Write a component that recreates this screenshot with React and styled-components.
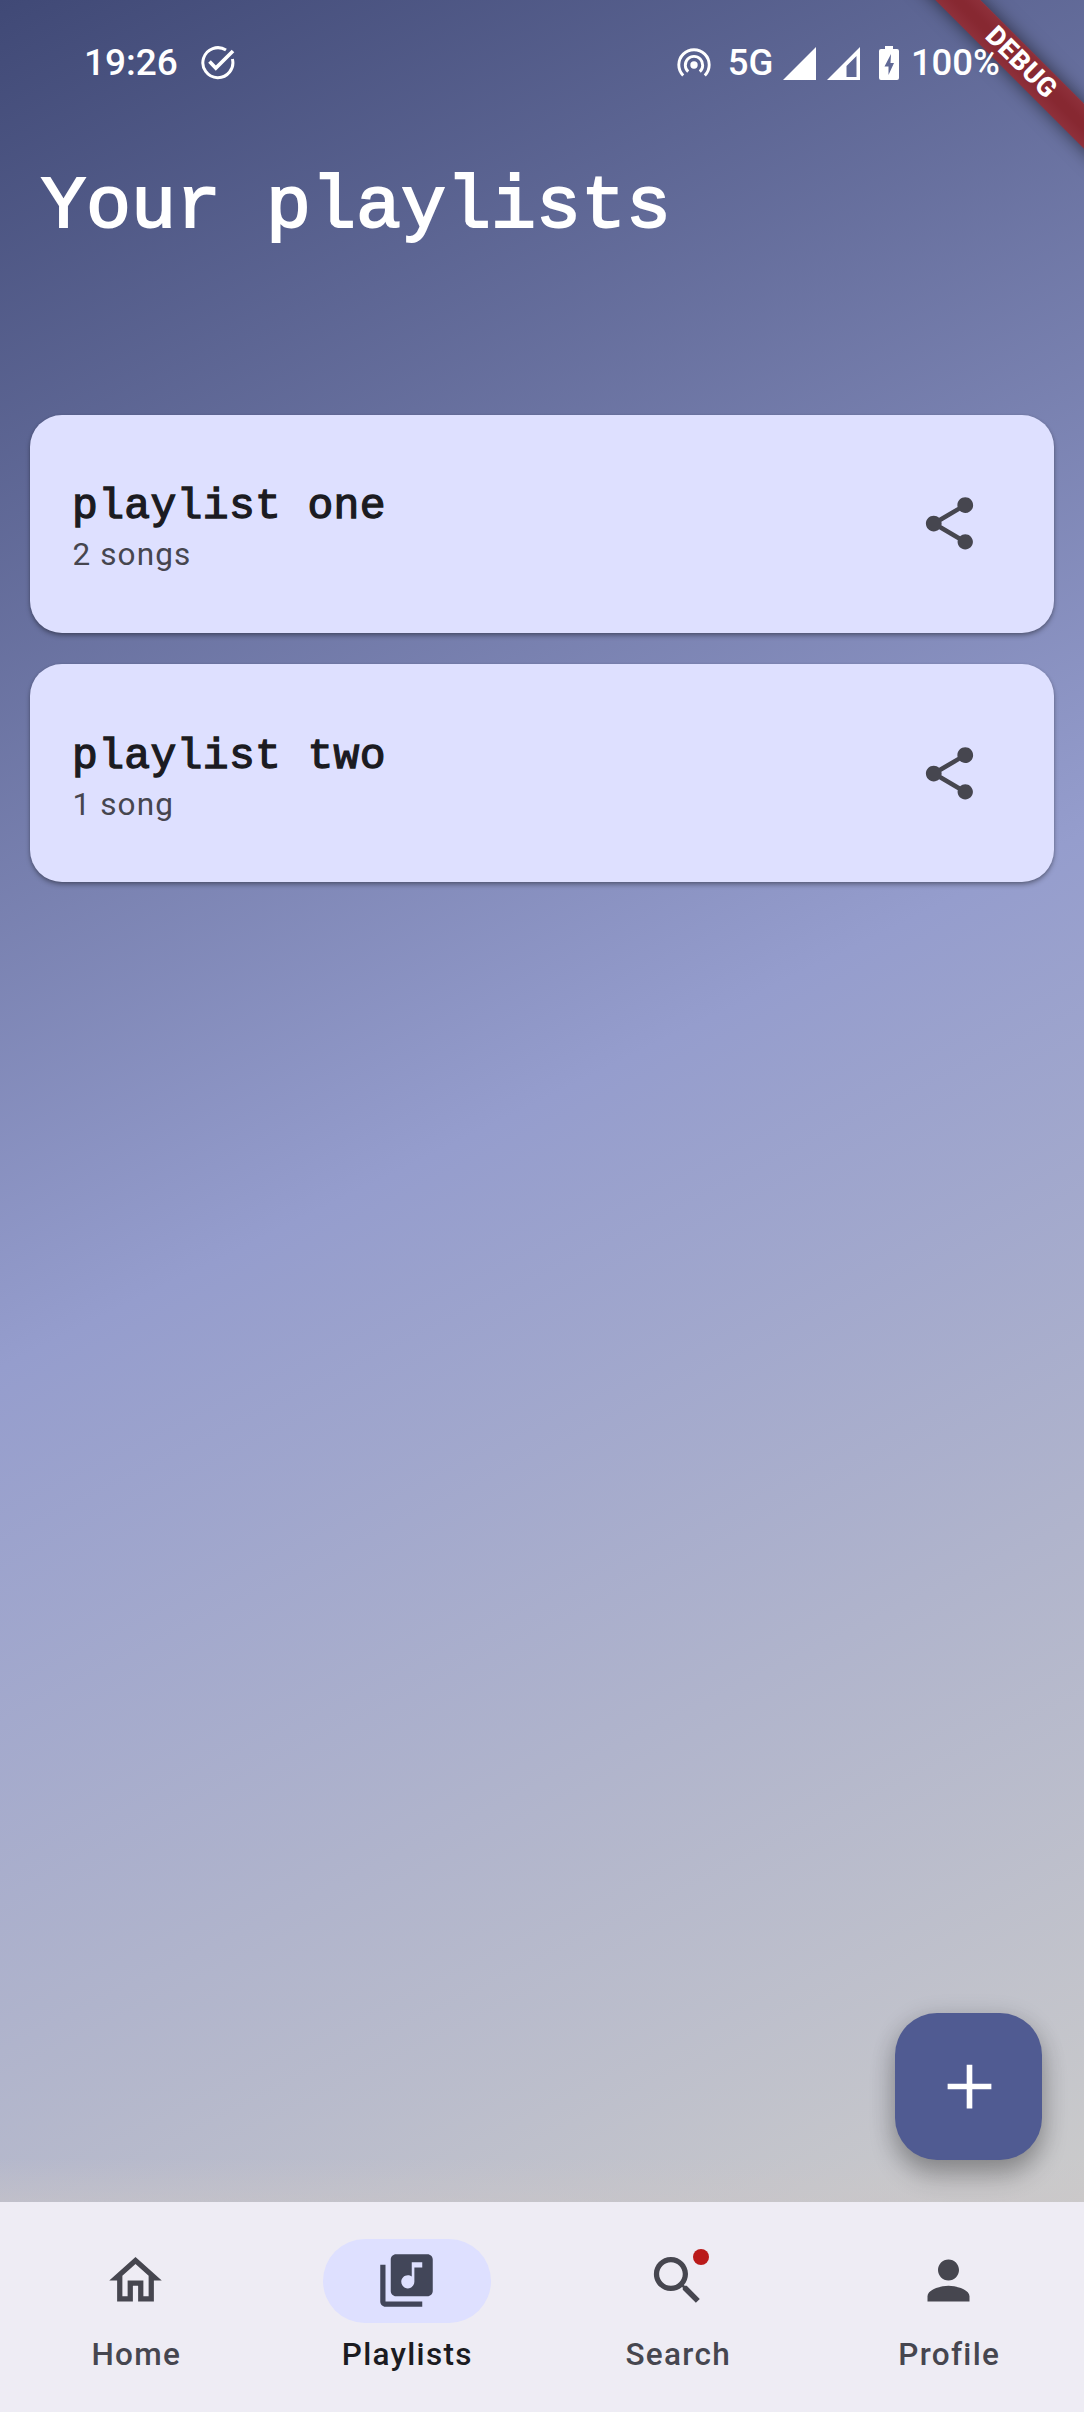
import React from "react";
import styled, { createGlobalStyle } from "styled-components";

const GlobalStyle = createGlobalStyle`
  *, *::before, *::after { box-sizing: border-box; }
  body { margin: 0; font-family: Roboto, "Noto Sans", sans-serif; }
`;

const mono = `"Liberation Mono", "DejaVu Sans Mono", monospace`;

const Screen = styled.div`
  position: relative;
  display: flex;
  flex-direction: column;
  width: 1084px;
  height: 2412px;
  overflow: hidden;
  background: #eeecf4;
`;

const Body = styled.main`
  position: relative;
  flex: 1;
  display: flex;
  flex-direction: column;
  background:
    linear-gradient(to top, rgba(203, 198, 200, 0.5), rgba(203, 198, 200, 0) 44px),
    linear-gradient(153.8deg, #404976 0%, #959dcd 50%, #cbcbcb 100%);
`;

const StatusBar = styled.header`
  position: relative;
  z-index: 2;
  display: flex;
  justify-content: space-between;
  align-items: center;
  height: 126px;
  padding: 0 84px 0 84px;
  color: #fff;
`;

const StatusGroup = styled.div`
  display: flex;
  align-items: center;
`;

const StatusText = styled.span`
  font-size: ${(p) => p.$size || 37}px;
  font-weight: 500;
  line-height: 44px;
  padding-bottom: ${(p) => p.$lift || 0}px;
  margin-left: ${(p) => p.$gap || 0}px;
`;

const Glyph = styled.svg`
  display: block;
  flex: none;
  width: ${(p) => p.$w}px;
  height: ${(p) => p.$h || p.$w}px;
  margin-left: ${(p) => p.$gap || 0}px;
  fill: currentColor;
`;

const Title = styled.h1`
  margin: 0;
  padding: 40px 0 0 41px;
  height: 288.5px;
  color: #fff;
  font: 400 75px/84px ${mono};
  -webkit-text-stroke: 2px #fff;
`;

const List = styled.section`
  display: flex;
  flex-direction: column;
  gap: 31.5px;
  padding: 0 30px;
`;

const Card = styled.article`
  display: flex;
  align-items: center;
  justify-content: space-between;
  height: 218px;
  padding: 0 73.5px 0 42px;
  border-radius: 32px;
  background: #dee0ff;
  box-shadow: 0 3px 5px rgba(0, 0, 0, 0.28), 0 1px 3px rgba(0, 0, 0, 0.16);
`;

const CardText = styled.div`
  display: flex;
  flex-direction: column;
  padding-top: 9px;
`;

const CardName = styled.h2`
  margin: 0;
  color: #1b1b21;
  font: 400 43px/54px ${mono};
  letter-spacing: 0.35px;
  -webkit-text-stroke: 1.3px #1b1b21;
`;

const CardMeta = styled.p`
  margin: 0;
  padding-left: 0.5px;
  color: #46464f;
  font-size: 31.5px;
  line-height: 42px;
  letter-spacing: 1.1px;
`;

const ShareButton = styled.button`
  display: flex;
  padding: 0;
  border: 0;
  background: none;
  color: #46464f;
`;

const Fab = styled.button`
  position: absolute;
  right: 42px;
  bottom: 42px;
  display: flex;
  align-items: center;
  justify-content: center;
  width: 147px;
  height: 147px;
  padding: 0 0 0 1px;
  border: 0;
  border-radius: 42px;
  background: #505b92;
  color: #fff;
  box-shadow: 0 16px 26px rgba(0, 0, 0, 0.24), 0 4px 24px rgba(0, 0, 0, 0.16);
`;

const Nav = styled.nav`
  position: relative;
  display: grid;
  grid-template-columns: repeat(4, 1fr);
  height: 210px;
  background: #eeecf4;
`;

const NavItem = styled.a`
  display: flex;
  flex-direction: column;
  align-items: center;
  padding-top: 37px;
  color: ${(p) => (p.$active ? "#1b1b21" : "#46464f")};
`;

const Indicator = styled.span`
  position: relative;
  display: flex;
  align-items: center;
  justify-content: center;
  width: 168px;
  height: 84px;
  padding-bottom: 1px;
  border-radius: 42px;
  background: ${(p) => (p.$active ? "#dee0ff" : "transparent")};
  color: ${(p) => (p.$active ? "#424659" : "#46464f")};
`;

const Badge = styled.span`
  position: absolute;
  top: 10px;
  left: 99.5px;
  width: 16px;
  height: 16px;
  border-radius: 50%;
  background: #ba1a1a;
`;

const NavLabel = styled.span`
  margin-top: 11px;
  padding-left: 1.5px;
  font-size: 31.5px;
  font-weight: 500;
  line-height: 42px;
  letter-spacing: 1.3px;
`;

const DebugCorner = styled.div`
  position: absolute;
  z-index: 1;
  top: 0;
  right: 0;
  width: 240px;
  height: 240px;
  overflow: hidden;
  pointer-events: none;
`;

const DebugRibbon = styled.div`
  position: absolute;
  top: 47.4px;
  right: -86.9px;
  display: flex;
  align-items: center;
  justify-content: center;
  width: 300px;
  height: 31.5px;
  transform: rotate(45deg);
  background: linear-gradient(#8e303b, #872831 40%, #872831 60%, #8e303b);
  box-shadow: 0 0 18px rgba(0, 0, 0, 0.55);
  color: #fff;
  font-size: 27px;
  font-weight: 800;
  line-height: 31px;
  letter-spacing: 0.4px;
`;

const paths = {
  share:
    "M18 16.08c-.76 0-1.44.3-1.96.77L8.91 12.7c.05-.23.09-.46.09-.7s-.04-.47-.09-.7l7.05-4.11c.54.5 1.25.81 2.04.81 1.66 0 3-1.34 3-3s-1.34-3-3-3-3 1.34-3 3c0 .24.04.47.09.7L8.04 9.81C7.5 9.31 6.79 9 6 9c-1.66 0-3 1.34-3 3s1.34 3 3 3c.79 0 1.5-.31 2.04-.81l7.12 4.16c-.05.21-.08.43-.08.65 0 1.61 1.31 2.92 2.92 2.92s2.92-1.31 2.92-2.92-1.31-2.92-2.92-2.92z",
  add: "M19 12.9h-6.100v6.100h-1.800v-6.100H5v-1.800h6.100V5h1.800v6.100H19z",
  home: "M12 5.69l5 4.5V18h-2v-6H9v6H7v-7.81l5-4.5M12 3L2 12h3v8h6v-6h2v6h6v-8h3L12 3z",
  library:
    "M20 2H8c-1.1 0-2 .9-2 2v12c0 1.1.9 2 2 2h12c1.1 0 2-.9 2-2V4c0-1.1-.9-2-2-2zm-2 5h-3v5.5c0 1.38-1.12 2.5-2.5 2.5S10 13.88 10 12.5s1.12-2.5 2.5-2.5c.57 0 1.08.19 1.5.51V5h4v2zM4 6H2v14c0 1.1.9 2 2 2h14v-2H4V6z",
  search:
    "M15.5 14h-.79l-.28-.27C15.41 12.59 16 11.11 16 9.5 16 5.91 13.09 3 9.5 3S3 5.91 3 9.5 5.91 16 9.5 16c1.61 0 3.09-.59 4.23-1.57l.27.28v.79l5 4.99L20.49 19l-4.99-5zm-6 0C7.01 14 5 11.99 5 9.5S7.01 5 9.5 5 14 7.01 14 9.5 11.99 14 9.5 14z",
  person:
    "M12 12c2.21 0 4-1.79 4-4s-1.79-4-4-4-4 1.79-4 4 1.79 4 4 4zm0 2c-2.67 0-8 1.34-8 4v2h16v-2c0-2.66-5.33-4-8-4z",
};

function Icon({ name, size }) {
  return (
    <Glyph viewBox="0 0 24 24" $w={size}>
      <path d={paths[name]} />
    </Glyph>
  );
}

function TaskDoneIcon() {
  return (
    <Glyph viewBox="0 0 34 34" $w={34} $gap={23}>
      <g fill="none" stroke="currentColor" strokeWidth="3">
        <path d="M25 4.1A15 15 0 1 0 31.4 13" />
        <path strokeWidth="3.6" d="M8.5 15.5l6.3 6.6L32 5" />
      </g>
    </Glyph>
  );
}

function HotspotIcon() {
  return (
    <Glyph viewBox="0 0 34 30" $w={34} $h={30}>
      <circle cx="17" cy="17" r="3.7" />
      <g fill="none" stroke="currentColor" strokeWidth="2.9">
        <path d="M11.2 23.6A8.7 8.7 0 1 1 22.8 23.6" />
        <path d="M6.2 27.6A15.2 15.2 0 1 1 27.8 27.6" />
      </g>
    </Glyph>
  );
}

function SignalFull() {
  return (
    <Glyph viewBox="0 0 33 33" $w={33} $gap={10}>
      <path d="M33 0v33H0z" />
    </Glyph>
  );
}

function SignalPartial() {
  return (
    <Glyph viewBox="0 0 33 33" $w={33} $gap={11}>
      <path fillRule="evenodd" d="M33 0v33H0zM29.5 9L19.500 19v11h10z" />
    </Glyph>
  );
}

function BatteryIcon() {
  return (
    <Glyph viewBox="0 0 20 34" $w={20} $h={34} $gap={19}>
      <path
        fillRule="evenodd"
        d="M6 0h8v3h4a2 2 0 0 1 2 2v27a2 2 0 0 1-2 2H2a2 2 0 0 1-2-2V5a2 2 0 0 1 2-2h4zM12 8L5.5 20.5H9.5V29L15 17H11.5z"
      />
    </Glyph>
  );
}

const playlists = [
  { name: "playlist one", meta: "2 songs" },
  { name: "playlist two", meta: "1 song" },
];

const tabs = [
  { label: "Home", icon: "home" },
  { label: "Playlists", icon: "library", active: true },
  { label: "Search", icon: "search", badge: true },
  { label: "Profile", icon: "person" },
];

export default function App() {
  return (
    <Screen>
      <GlobalStyle />
      <Body>
        <StatusBar>
          <StatusGroup>
            <StatusText $lift={1}>19:26</StatusText>
            <TaskDoneIcon />
          </StatusGroup>
          <StatusGroup>
            <HotspotIcon />
            <StatusText $gap={17} $size={36.5}>5G</StatusText>
            <SignalFull />
            <SignalPartial />
            <BatteryIcon />
            <StatusText $gap={11.5} $size={36.5}>100%</StatusText>
          </StatusGroup>
        </StatusBar>
        <Title>Your playlists</Title>
        <List>
          {playlists.map((p) => (
            <Card key={p.name}>
              <CardText>
                <CardName>{p.name}</CardName>
                <CardMeta>{p.meta}</CardMeta>
              </CardText>
              <ShareButton aria-label="Share">
                <Icon name="share" size={63} />
              </ShareButton>
            </Card>
          ))}
        </List>
        <Fab aria-label="Add playlist">
          <Icon name="add" size={75} />
        </Fab>
      </Body>
      <Nav>
        {tabs.map((t) => (
          <NavItem key={t.label} $active={t.active}>
            <Indicator $active={t.active}>
              <Icon name={t.icon} size={63} />
              {t.badge && <Badge />}
            </Indicator>
            <NavLabel>{t.label}</NavLabel>
          </NavItem>
        ))}
      </Nav>
      <DebugCorner>
        <DebugRibbon>DEBUG</DebugRibbon>
      </DebugCorner>
    </Screen>
  );
}
